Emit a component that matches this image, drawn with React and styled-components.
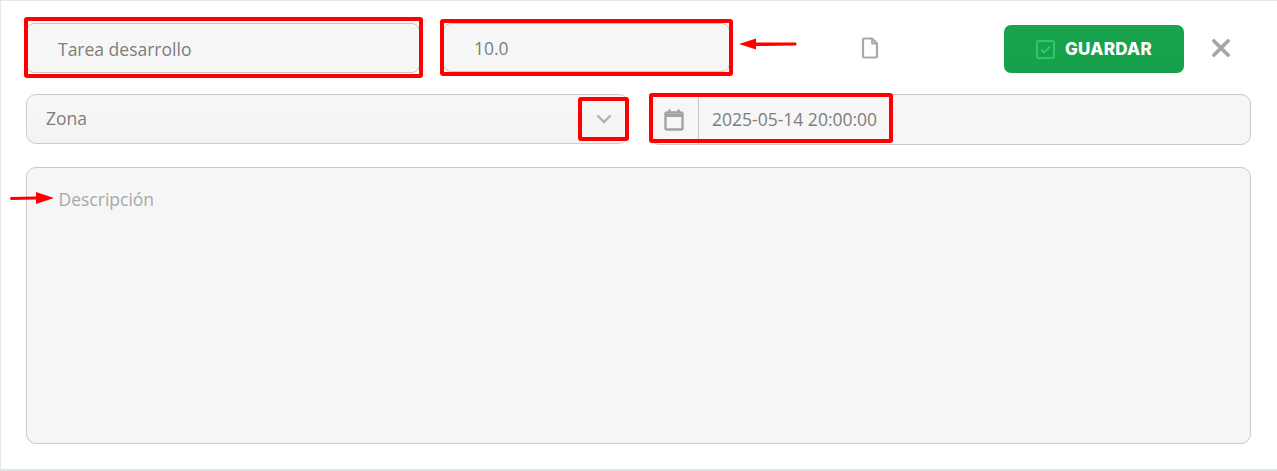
import React from "react";
import styled, { createGlobalStyle } from "styled-components";

const Global = createGlobalStyle`
  html, body { margin: 0; padding: 0; background: #fff; }
  body { font-family: "Open Sans", "Liberation Sans", sans-serif; }
`;

const Frame = styled.div`
  position: relative;
  box-sizing: border-box;
  width: 1277px;
  height: 471px;
  padding: 22px 26px 25px 26px;
  border-top: 1px solid #e3e8e8;
  border-left: 1px solid #e3e8e8;
  border-bottom: 2px solid #e0e3e3;
  display: flex;
  flex-direction: column;
`;

const TopRow = styled.div`
  display: flex;
  align-items: flex-start;
  height: 50px;
  margin-left: -1px;
`;

const Field = styled.div`
  box-sizing: border-box;
  width: ${(p) => p.$w}px;
  height: ${(p) => p.$h}px;
  margin-right: ${(p) => p.$mr || 0}px;
  padding-left: ${(p) => p.$pl}px;
  padding-top: ${(p) => p.$pt || 0}px;
  display: flex;
  align-items: center;
  background: #f6f6f6;
  border: 1px solid #c8c8c8;
  border-radius: 8px;
  color: #7d7d7d;
  font-size: 17.5px;
`;

const IconSlot = styled.div`
  width: 30px;
  height: 50px;
  margin-left: 125px;
  display: flex;
  align-items: center;
  justify-content: center;
  color: #a9a9a9;
`;

const SaveButton = styled.button`
  box-sizing: border-box;
  width: 180px;
  height: 48px;
  margin: 2px 0 0 119px;
  padding: 0;
  display: flex;
  align-items: center;
  justify-content: center;
  gap: 10px;
  background: linear-gradient(#18a34d, #17a04b);
  border: none;
  border-radius: 7px;
  color: #fff;
  font-family: "Inter", "Liberation Sans", sans-serif;
  font-weight: 800;
  font-size: 17px;
  letter-spacing: 0.3px;
`;

const CloseSlot = styled.div`
  width: 22px;
  height: 50px;
  margin-left: 26px;
  display: flex;
  align-items: center;
  justify-content: center;
  color: #a6a6a6;
`;

const SecondRow = styled.div`
  display: flex;
  gap: 20px;
  margin-top: 21px;
  margin-left: -1px;
`;

const Select = styled.div`
  box-sizing: border-box;
  width: 603px;
  height: 50px;
  display: flex;
  align-items: center;
  justify-content: space-between;
  padding-left: 19px;
  background: linear-gradient(#f7f7f7, #f3f3f3);
  border: 1px solid #cdcdcd;
  border-radius: 10px;
  color: #7d7d7d;
  font-size: 17.5px;
`;

const SelectLabel = styled.span`
  margin-top: -2px;
`;

const Chevron = styled.div`
  width: 47px;
  height: 100%;
  display: flex;
  align-items: center;
  justify-content: center;
  color: #b0b0b0;
`;

const DateGroup = styled.div`
  box-sizing: border-box;
  width: 603px;
  height: 51px;
  display: flex;
  background: #f6f6f6;
  border: 1px solid #c8c8c8;
  border-radius: 10px;
  color: #7d7d7d;
  font-size: 17.5px;
`;

const DateAddon = styled.div`
  width: 48px;
  display: flex;
  align-items: center;
  justify-content: center;
  border-right: 1px solid #c8c8c8;
  color: #a3a3a3;
`;

const DateValue = styled.div`
  display: flex;
  align-items: center;
  padding-left: 13.5px;
  margin-top: -1px;
`;

const TextArea = styled.div`
  box-sizing: border-box;
  width: 1225px;
  height: 277px;
  margin-top: 22px;
  margin-left: -1px;
  padding: 19px 31.5px;
  background: #f6f6f6;
  border: 1px solid #c8c8c8;
  border-radius: 10px;
  color: #a8a8a8;
  font-size: 17.5px;
  line-height: 24px;
`;

const RedBox = styled.div`
  position: absolute;
  box-sizing: border-box;
  left: ${(p) => p.$x - 1}px;
  top: ${(p) => p.$y - 1}px;
  width: ${(p) => p.$w}px;
  height: ${(p) => p.$h}px;
  border: 4px solid #ff0000;
  border-radius: 3px;
  pointer-events: none;
`;

const Arrow = styled.svg`
  position: absolute;
  left: ${(p) => p.$x - 1}px;
  top: ${(p) => p.$y - 1}px;
`;

export default function App() {
  return (
    <>
      <Global />
      <Frame>
        <TopRow>
          <Field $w={394} $h={50} $pl={31} $pt={1} $mr={23}>Tarea desarrollo</Field>
          <Field $w={287} $h={49} $pl={30}>10.0</Field>
          <IconSlot>
            <svg width="18" height="22" viewBox="0 0 18 22" fill="none" stroke="currentColor" strokeWidth="2.2" strokeLinejoin="round">
              <path d="M2 2.5a1 1 0 0 1 1-1h8l5 5v13a1 1 0 0 1-1 1H3a1 1 0 0 1-1-1z" />
              <path d="M11 1.5v5h5" strokeWidth="1.8" />
            </svg>
          </IconSlot>
          <SaveButton>
            <svg width="19" height="19" viewBox="0 0 19 19" fill="none" stroke="#2cc96a" strokeWidth="2">
              <rect x="1" y="1" width="17" height="17" rx="1.5" />
              <path d="M5 9.5l3 3 6-6" />
            </svg>
            GUARDAR
          </SaveButton>
          <CloseSlot>
            <svg width="18" height="18" viewBox="0 0 18 18" stroke="currentColor" strokeWidth="3.8" strokeLinecap="round">
              <path d="M2 2l14 14M16 2L2 16" />
            </svg>
          </CloseSlot>
        </TopRow>
        <SecondRow>
          <Select>
            <SelectLabel>Zona</SelectLabel>
            <Chevron>
              <svg width="16" height="10" viewBox="0 0 16 10" fill="none" stroke="currentColor" strokeWidth="2.4">
                <path d="M1.5 1.5L8 8l6.5-6.5" />
              </svg>
            </Chevron>
          </Select>
          <DateGroup>
            <DateAddon>
              <svg width="20" height="22" viewBox="0 0 20 22" fill="none" stroke="currentColor" strokeWidth="2.4">
                <rect x="1.5" y="3.5" width="17" height="17" rx="1.5" />
                <path d="M1.5 6.5h17" strokeWidth="3" />
                <path d="M5.5 0.5v4M14.5 0.5v4" strokeWidth="2.6" />
              </svg>
            </DateAddon>
            <DateValue>2025-05-14 20:00:00</DateValue>
          </DateGroup>
        </SecondRow>
        <TextArea>Descripción</TextArea>

        <RedBox $x={24} $y={17} $w={399} $h={61} />
        <RedBox $x={440} $y={19} $w={293} $h={57} />
        <RedBox $x={578} $y={97} $w={51} $h={44} />
        <RedBox $x={649} $y={93} $w={244} $h={50} />
        <Arrow $x={738} $y={37} width="60" height="14" viewBox="0 0 60 14">
          <path d="M1 7L18 1.5V5.5L58 5.5Q59 7 58 8.5L18 9V12.5z" fill="#ff0000" />
        </Arrow>
        <Arrow $x={9} $y={191} width="46" height="14" viewBox="0 0 46 14">
          <path d="M45 7L27 1V5.5L2 6Q0 7.5 2 9L27 8.5V13z" fill="#ff0000" />
        </Arrow>
      </Frame>
    </>
  );
}
